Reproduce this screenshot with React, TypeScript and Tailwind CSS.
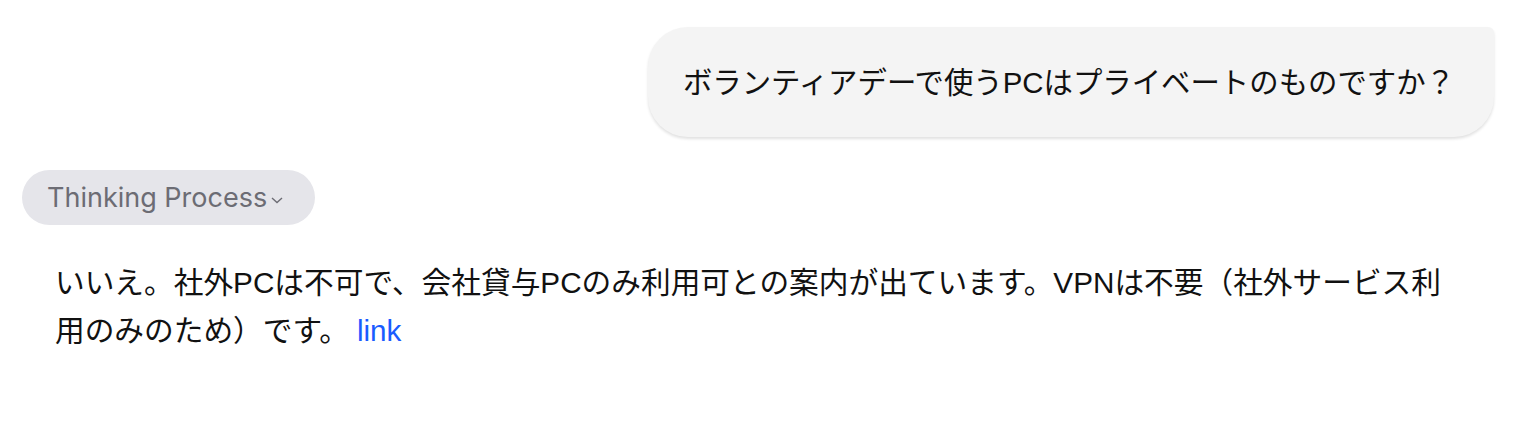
export default function App() {
  return (
    <div
      className="w-[1520px] h-[422px] bg-white pl-[22px] pr-[26px] pt-[27px]"
      style={{ fontFamily: '"Liberation Sans", "Noto Sans CJK JP", sans-serif' }}
    >
      <div className="flex justify-end">
        <div className="bg-[#f4f4f4] rounded-[40px] rounded-tr-[6px] shadow-[0_2px_3px_rgba(0,0,0,0.12)] pl-[35px] pr-[39px] pt-[3px] h-[110px] flex items-center text-[29.4px] text-[#111]">
          ボランティアデーで使うPCはプライベートのものですか？
        </div>
      </div>
      <div className="mt-[33px] flex">
        <div
          className="h-[55px] rounded-full bg-[#e5e5ea] pl-[25px] pr-[32px] pt-[2px] flex items-center text-[27px] text-[#6c6c74]"
          style={{ fontFamily: 'Inter, "Liberation Sans", sans-serif' }}
        >
          <span>Thinking Process</span>
          <svg width="12" height="7" viewBox="0 0 12 7" className="ml-[4px] mt-[3px]">
            <polyline points="1,1 6,5.5 11,1" fill="none" stroke="#6c6c74" strokeWidth="1.4" />
          </svg>
        </div>
      </div>
      <div className="mt-[34px] pl-[33px] pr-[28px] text-[29.7px] leading-[48px] text-[#111]">
        いいえ。社外PCは不可で、会社貸与PCのみ利用可との案内が出ています。VPNは不要（社外サービス利用のみのため）です。<a className="ml-[8px] text-[#1a5cff]">link</a>
      </div>
    </div>
  );
}
